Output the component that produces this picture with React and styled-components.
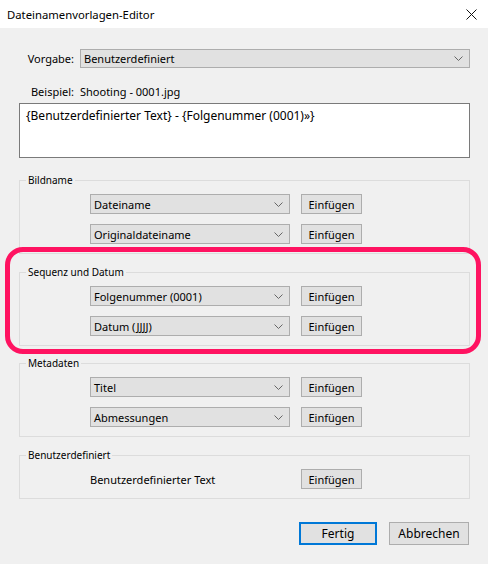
import React from 'react';
import styled, { createGlobalStyle } from 'styled-components';

const GlobalStyle = createGlobalStyle`
  html, body {
    margin: 0;
    padding: 0;
    background: #f0f0f0;
  }
  body {
    font-family: "Noto Sans", "Open Sans", sans-serif;
    font-size: 11px;
    color: #000;
  }
`;

const Dialog = styled.div`
  position: relative;
  width: 488px;
  height: 564px;
  background: #f0f0f0;
  overflow: hidden;
`;

const TitleBar = styled.div`
  height: 28px;
  background: #fff;
  display: flex;
  align-items: center;
  justify-content: space-between;
  padding: 0 11px 0 7px;
  font-size: 11.3px;
`;

const Body = styled.div`
  padding: 0 18px 0 19px;
  display: flex;
  flex-direction: column;
`;

const LabelRow = styled.div`
  display: flex;
  align-items: center;
  margin-top: ${p => p.$top}px;
`;

const Label = styled.span`
  width: 55px;
  padding-right: 6px;
  text-align: right;
`;

const Select = styled.div`
  box-sizing: border-box;
  display: flex;
  align-items: center;
  justify-content: space-between;
  height: ${p => p.$h || 20}px;
  width: ${p => (p.$w ? p.$w + 'px' : 'auto')};
  flex: ${p => (p.$w ? 'none' : '1')};
  background: #e1e1e1;
  border: 1px solid #adadad;
  padding: 0 6px 0 3px;
`;

const TextBox = styled.div`
  box-sizing: border-box;
  margin-top: 4px;
  height: 55px;
  background: #fff;
  border: 1px solid #7a7a7a;
  padding: 3px 6px;
  font-size: 12px;
`;

const Group = styled.fieldset`
  margin: ${p => p.$top}px 0 0 0;
  border: 1px solid #dcdcdc;
  padding: 0;
  min-width: 0;
`;

const Legend = styled.legend`
  font-size: 10px;
  line-height: 12px;
  padding: 0 2px;
  margin-left: 6px;
`;

const Rows = styled.div`
  display: flex;
  flex-direction: column;
  gap: 10px;
  padding: 8px 0 9px 70px;
`;

const Row = styled.div`
  display: flex;
  align-items: center;
  gap: 11px;
  height: 20px;
`;

const Button = styled.div`
  box-sizing: border-box;
  width: ${p => p.$w || 61}px;
  height: ${p => p.$h || 20}px;
  display: flex;
  align-items: center;
  justify-content: center;
  background: #e1e1e1;
  border: ${p => (p.$primary ? '2px solid #0078d7' : '1px solid #adadad')};
  font-size: ${p => p.$fs || 11}px;
`;

const CustomLabel = styled.span`
  width: 200px;
`;

const Footer = styled.div`
  display: flex;
  justify-content: flex-end;
  gap: 12px;
  margin-top: 23px;
  padding-right: 1px;
`;

const Highlight = styled.div`
  position: absolute;
  left: 5px;
  top: 247px;
  width: 476px;
  height: 107px;
  box-sizing: border-box;
  border: 5px solid #ff1361;
  border-radius: 18px;
  pointer-events: none;
`;

const Chevron = () => (
  <svg width="9" height="5" viewBox="0 0 9 5" fill="none">
    <path d="M0.5 0.5 L4.5 4.5 L8.5 0.5" stroke="#666" strokeWidth="1" />
  </svg>
);

const Close = () => (
  <svg width="11" height="11" viewBox="0 0 11 11">
    <path d="M0.5 0.5 L10.5 10.5 M10.5 0.5 L0.5 10.5" stroke="#111" strokeWidth="1" />
  </svg>
);

const Dropdown = ({ label, w, h }) => (
  <Select $w={w} $h={h}>
    <span>{label}</span>
    <Chevron />
  </Select>
);

const groups = [
  { title: 'Bildname', top: 16, items: ['Dateiname', 'Originaldateiname'] },
  { title: 'Sequenz und Datum', top: 12, items: ['Folgenummer (0001)', 'Datum (JJJJ)'] },
  { title: 'Metadaten', top: 11, items: ['Titel', 'Abmessungen'] },
];

export default function App() {
  return (
    <Dialog>
      <GlobalStyle />
      <TitleBar>
        <span>Dateinamenvorlagen-Editor</span>
        <Close />
      </TitleBar>
      <Body>
        <LabelRow $top={21}>
          <Label>Vorgabe:</Label>
          <Dropdown label="Benutzerdefiniert" h={19} />
        </LabelRow>
        <LabelRow $top={16}>
          <Label>Beispiel:</Label>
          <span>Shooting - 0001.jpg</span>
        </LabelRow>
        <TextBox>{'{Benutzerdefinierter Text} - {Folgenummer (0001)»}'}</TextBox>
        {groups.map(g => (
          <Group key={g.title} $top={g.top}>
            <Legend>{g.title}</Legend>
            <Rows>
              {g.items.map(item => (
                <Row key={item}>
                  <Dropdown label={item} w={200} />
                  <Button>Einfügen</Button>
                </Row>
              ))}
            </Rows>
          </Group>
        ))}
        <Group $top={12}>
          <Legend>Benutzerdefiniert</Legend>
          <Rows>
            <Row>
              <CustomLabel>Benutzerdefinierter Text</CustomLabel>
              <Button>Einfügen</Button>
            </Row>
          </Rows>
        </Group>
        <Footer>
          <Button $primary $w={78} $h={23} $fs={12}>Fertig</Button>
          <Button $w={80} $h={23} $fs={12}>Abbrechen</Button>
        </Footer>
      </Body>
      <Highlight />
    </Dialog>
  );
}
